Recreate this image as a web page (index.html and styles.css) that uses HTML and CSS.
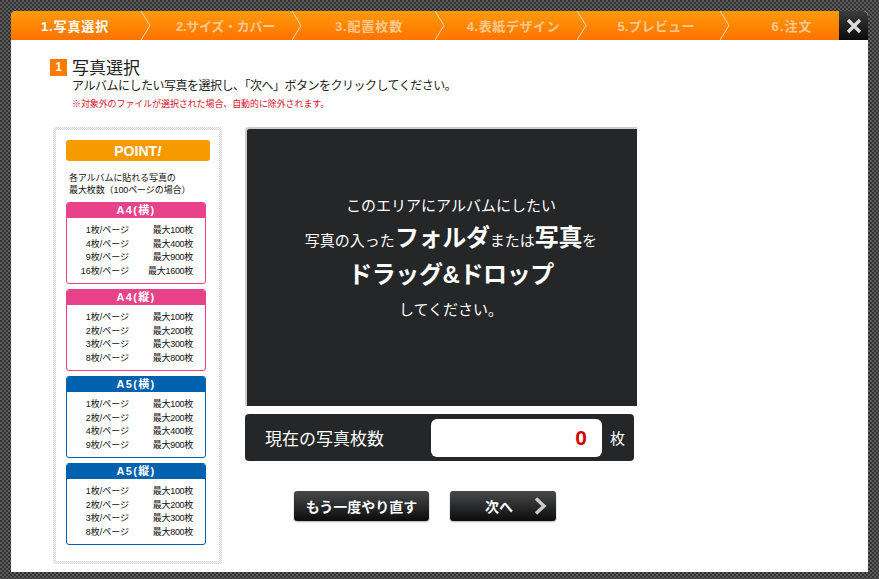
FILE: index.html
```html
<!DOCTYPE html>
<html lang="ja">
<head>
  <meta charset="UTF-8" />
  <title>写真選択</title>
  <link rel="stylesheet" href="styles.css">
</head>
<body>

  <div class="modal">
    <header class="steps">
      <div class="step step-1 active">1.写真選択<svg class="chevron" viewBox="0 0 10 29"><path d="M0 0 L9 14.5 L0 29"/></svg></div>
      <div class="step step-2">2.サイズ・カバー<svg class="chevron" viewBox="0 0 10 29"><path d="M0 0 L9 14.5 L0 29"/></svg></div>
      <div class="step step-3">3.配置枚数<svg class="chevron" viewBox="0 0 10 29"><path d="M0 0 L9 14.5 L0 29"/></svg></div>
      <div class="step step-4">4.表紙デザイン<svg class="chevron" viewBox="0 0 10 29"><path d="M0 0 L9 14.5 L0 29"/></svg></div>
      <div class="step step-5">5.プレビュー<svg class="chevron" viewBox="0 0 10 29"><path d="M0 0 L9 14.5 L0 29"/></svg></div>
      <div class="step step-6">6.注文</div>
      <div class="close">
        <svg viewBox="0 0 16 16" width="16" height="16"><path d="M2 2 L14 14 M14 2 L2 14"/></svg>
      </div>
    </header>

    <div class="content">
      <div class="section-head">
        <div class="badge">1</div>
        <div class="section-text">
          <h2>写真選択</h2>
          <p class="lead">アルバムにしたい写真を選択し、「次へ」ボタンをクリックしてください。</p>
          <p class="note">※対象外のファイルが選択された場合、自動的に除外されます。</p>
        </div>
      </div>

      <div class="columns">
        <aside class="point-box">
          <div class="point-title">POINT<i>!</i></div>
          <p class="point-intro">各アルバムに貼れる写真の<br>最大枚数（100ページの場合）</p>

          <div class="size-card pink">
            <div class="size-title">A4(横)</div>
            <div class="size-rows">
              <span>1枚/ページ</span><span>最大100枚</span>
              <span>4枚/ページ</span><span>最大400枚</span>
              <span>9枚/ページ</span><span>最大900枚</span>
              <span>16枚/ページ</span><span>最大1600枚</span>
            </div>
          </div>

          <div class="size-card pink">
            <div class="size-title">A4(縦)</div>
            <div class="size-rows">
              <span>1枚/ページ</span><span>最大100枚</span>
              <span>2枚/ページ</span><span>最大200枚</span>
              <span>3枚/ページ</span><span>最大300枚</span>
              <span>8枚/ページ</span><span>最大800枚</span>
            </div>
          </div>

          <div class="size-card blue">
            <div class="size-title">A5(横)</div>
            <div class="size-rows">
              <span>1枚/ページ</span><span>最大100枚</span>
              <span>2枚/ページ</span><span>最大200枚</span>
              <span>4枚/ページ</span><span>最大400枚</span>
              <span>9枚/ページ</span><span>最大900枚</span>
            </div>
          </div>

          <div class="size-card blue">
            <div class="size-title">A5(縦)</div>
            <div class="size-rows">
              <span>1枚/ページ</span><span>最大100枚</span>
              <span>2枚/ページ</span><span>最大200枚</span>
              <span>3枚/ページ</span><span>最大300枚</span>
              <span>8枚/ページ</span><span>最大800枚</span>
            </div>
          </div>
        </aside>

        <main class="main-col">
          <div class="drop-area">
            <p class="drop-line">このエリアにアルバムにしたい</p>
            <p class="drop-line">写真の入った<b>フォルダ</b>または<b>写真</b>を</p>
            <p class="drop-line big">ドラッグ&amp;ドロップ</p>
            <p class="drop-line">してください。</p>
          </div>

          <div class="count-bar">
            <span class="count-label">現在の写真枚数</span>
            <div class="count-value">0</div>
            <span class="count-unit">枚</span>
          </div>

          <div class="buttons">
            <div class="btn btn-retry">もう一度やり直す</div>
            <div class="btn btn-next">次へ
              <svg viewBox="0 0 14 18" width="14" height="18"><path d="M2 1.5 L10 9 L2 16.5"/></svg>
            </div>
          </div>
        </main>
      </div>
    </div>
  </div>

</body>
</html>
```

FILE: styles.css
```css
* {
  margin: 0;
  padding: 0;
  box-sizing: border-box;
  font-family: "Liberation Sans", "Noto Sans CJK JP", sans-serif;
}

html, body {
  height: 579px;
  overflow: hidden;
}

body {
  background-color: #3a3a3a;
  background-image: conic-gradient(#5a5a5a 25%, #333 0 50%, #5a5a5a 0 75%, #333 0);
  background-size: 4px 4px;
  padding: 11px 11px 7px 11px;
}

.modal {
  width: 857px;
  height: 561px;
  background: #fff;
  border-radius: 5px 5px 0 0;
  overflow: hidden;
}

/* ステップ */
.steps {
  display: flex;
  height: 29px;
  background: linear-gradient(to bottom, #ff9a0a, #ff7300);
}

.step {
  position: relative;
  display: flex;
  align-items: center;
  justify-content: center;
  font-size: 13px;
  font-weight: bold;
  letter-spacing: 0.6px;
  color: #ffc88c;
}

.step.active {
  color: #fff;
}

.chevron {
  position: absolute;
  right: 0;
  top: 0;
  width: 10px;
  height: 29px;
  fill: none;
  stroke: #ffd9ad;
  stroke-width: 1;
}

.step-1 { width: 140px; padding-right: 12px; letter-spacing: 0.9px; }
.step-2 { width: 151px; padding-right: 2px; letter-spacing: -0.3px; }
.step-3 { width: 143px; padding-right: 9px; letter-spacing: 0.9px; }
.step-4 { width: 142px; padding-right: 5px; }
.step-5 { width: 143px; padding-right: 5px; letter-spacing: 0.2px; }
.step-6 { width: 109px; padding-left: 15px; letter-spacing: 1px; }

.close {
  width: 29px;
  display: flex;
  align-items: center;
  justify-content: center;
  background: linear-gradient(to bottom, #3c3c3c, #0a0a0a);
  border-radius: 0 5px 0 0;
}

.close svg {
  fill: none;
  stroke: #ddd;
  stroke-width: 3.2;
}

/* 見出し */
.content {
  padding: 19px 0 0 39px;
}

.section-head {
  display: flex;
  gap: 5px;
}

.badge {
  width: 17px;
  height: 17px;
  background: #ff7a00;
  color: #fff;
  font-size: 12px;
  font-weight: bold;
  text-align: center;
  line-height: 17px;
}

h2 {
  font-size: 17px;
  font-weight: normal;
  line-height: 19px;
  color: #222;
}

.lead {
  font-size: 12px;
  line-height: 16px;
  letter-spacing: -0.5px;
  color: #222;
}

.note {
  font-size: 9px;
  line-height: 12px;
  margin-top: 4px;
  letter-spacing: -0.1px;
  color: #d8102c;
}

/* 左カラム */
.columns {
  display: flex;
  margin-top: 17px;
  margin-left: 3px;
  gap: 23px;
}

.point-box {
  width: 169px;
  height: 437px;
  padding: 10px 10px 0 10px;
  border: 3px solid transparent;
  border-radius: 3px;
  background: linear-gradient(#fff, #fff) padding-box,
    repeating-conic-gradient(#d8d8d8 0 25%, #f4f4f4 0 50%) 0 0 / 2px 2px border-box;
}

.point-title {
  width: 144px;
  height: 21px;
  background: #f59b00;
  border-radius: 3px;
  color: #fff;
  font-size: 14px;
  font-weight: bold;
  line-height: 22px;
  text-align: center;
}

.point-intro {
  font-size: 9px;
  line-height: 12px;
  margin: 11px 0 6px 3px;
  letter-spacing: -0.1px;
  color: #111;
}

.size-card {
  width: 140px;
  height: 82px;
  margin-bottom: 5px;
  border: 1px solid;
  border-radius: 3px;
  overflow: hidden;
}

.size-title {
  height: 15px;
  margin-bottom: 6px;
  color: #fff;
  font-size: 11px;
  font-weight: bold;
  line-height: 15px;
  text-align: center;
  letter-spacing: 1.3px;
}

.pink { border-color: #e8428a; }
.pink .size-title { background: #e8428a; }
.blue { border-color: #0062ae; }
.blue .size-title { background: #0062ae; }

.size-rows {
  display: grid;
  grid-template-columns: 62px 64px;
  justify-content: start;
  font-size: 9px;
  line-height: 13.7px;
  color: #111;
}

.size-rows span {
  text-align: right;
}

.size-rows span:nth-child(even) {
  letter-spacing: -0.3px;
}

/* 右カラム */
.main-col {
  width: 392px;
}

.drop-area {
  height: 279px;
  background: #252628;
  border-top: 2px solid #ccc;
  border-left: 2px solid #ccc;
  border-radius: 4px 0 0 0;
  padding: 60px 0 0 18px;
  color: #fff;
  text-align: center;
}

.drop-line {
  font-size: 15px;
  line-height: 34.5px;
}

.drop-line b {
  font-size: 24px;
  line-height: 1;
  letter-spacing: -0.3px;
}

.drop-line.big {
  font-size: 24px;
  font-weight: bold;
  letter-spacing: -0.4px;
}

.count-bar {
  display: flex;
  align-items: center;
  width: 389px;
  height: 47px;
  margin-top: 8px;
  background: #252628;
  border-radius: 4px;
  color: #fff;
  font-size: 17px;
}

.count-label {
  width: 186px;
  padding-left: 20px;
}

.count-value {
  width: 171px;
  height: 38px;
  padding-right: 15px;
  background: #fff;
  border-radius: 6px;
  color: #d40000;
  font-size: 21px;
  font-weight: bold;
  line-height: 38px;
  text-align: right;
}

.count-unit {
  margin-left: 8px;
  font-size: 15px;
}

.buttons {
  display: flex;
  gap: 21px;
  margin-top: 30px;
  margin-left: 49px;
}

.btn {
  display: flex;
  align-items: center;
  height: 30px;
  background: linear-gradient(to bottom, #47494b, #0c0c0c);
  border-radius: 3px;
  box-shadow: 0 1px 2px rgba(0, 0, 0, 0.3);
  color: #fff;
  font-size: 14px;
  font-weight: bold;
}

.btn-retry {
  width: 135px;
  justify-content: center;
}

.btn-next {
  width: 106px;
  gap: 21px;
  padding-left: 35px;
}

.btn-next svg {
  fill: none;
  stroke: #ccc;
  stroke-width: 3.4;
}
```
